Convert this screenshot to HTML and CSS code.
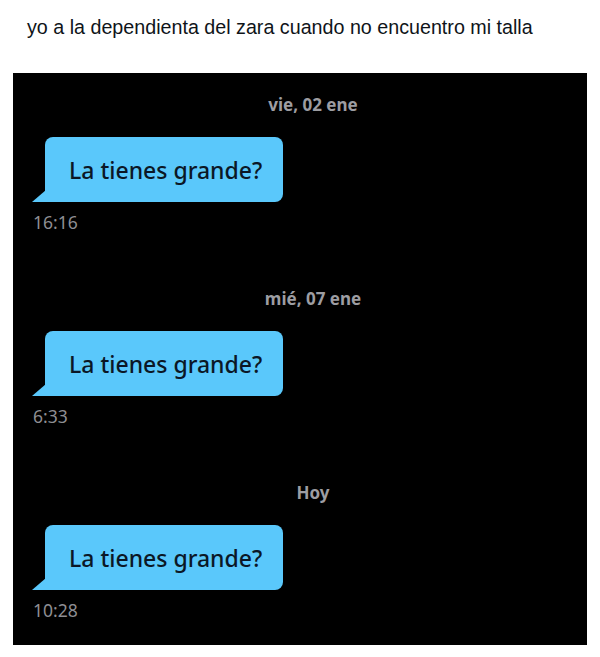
FILE: index.html
```html
<!DOCTYPE html>
<html lang="es">
<head>
  <meta charset="UTF-8" />
  <meta name="viewport" content="width=device-width, initial-scale=1.0" />
  <title>Chat</title>
  <link rel="stylesheet" href="styles.css">
</head>
<body>
  <p class="caption">yo a la dependienta del zara cuando no encuentro mi talla</p>

  <div class="chat">
    <div class="day">
      <div class="date">vie, 02 ene</div>
      <div class="bubble">La tienes grande?</div>
      <div class="time">16:16</div>
    </div>

    <div class="day">
      <div class="date">mié, 07 ene</div>
      <div class="bubble">La tienes grande?</div>
      <div class="time">6:33</div>
    </div>

    <div class="day">
      <div class="date">Hoy</div>
      <div class="bubble">La tienes grande?</div>
      <div class="time">10:28</div>
    </div>
  </div>
</body>
</html>
```

FILE: styles.css
```css
body {
  background-color: #ffffff;
  margin: 0;
  font-family: "Liberation Sans", Arial, sans-serif;
}

.caption {
  margin: 0;
  padding: 15px 27px 0;
  font-size: 19.7px;
  line-height: 24px;
  color: #0f1419;
}

.chat {
  margin: 34px 13px 0;
  height: 572px;
  box-sizing: border-box;
  background-color: #000000;
  padding: 22px 0 0 19px;
  display: flex;
  flex-direction: column;
  gap: 57px;
  font-family: "Noto Sans", sans-serif;
}

.day {
  display: flex;
  flex-direction: column;
}

.date {
  text-align: center;
  padding-left: 7px;
  color: #9d9da2;
  font-weight: 700;
  font-size: 17px;
  line-height: 20px;
}

.bubble {
  position: relative;
  margin: 22px 0 0 13px;
  width: 238px;
  height: 65px;
  box-sizing: border-box;
  padding-left: 24px;
  display: flex;
  align-items: center;
  background-color: #5ac8fb;
  border-radius: 8px 8px 8px 0;
  color: #0b1726;
  font-size: 23px;
  font-weight: 500;
}

.bubble::before {
  content: "";
  position: absolute;
  left: -13px;
  bottom: 0;
  width: 14px;
  height: 12px;
  background-color: #5ac8fb;
  clip-path: polygon(100% 0, 100% 100%, 0 100%);
}

.time {
  margin-top: 10px;
  padding-left: 1px;
  color: #8e8e93;
  font-size: 17.5px;
  line-height: 20px;
}
```
